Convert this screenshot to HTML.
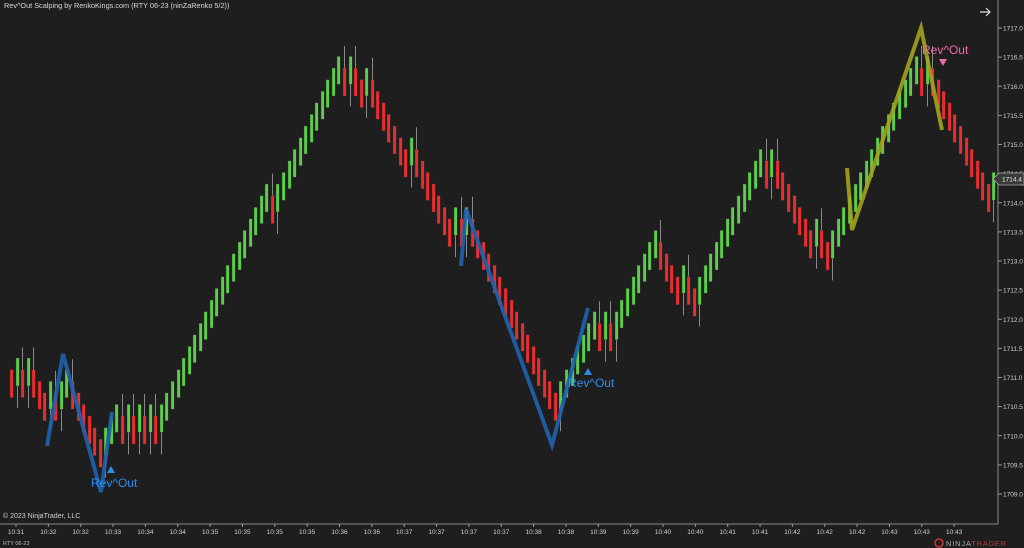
<!DOCTYPE html>
<html><head><meta charset="utf-8"><style>
html,body{margin:0;padding:0;background:#1e1e1e;width:1024px;height:548px;overflow:hidden;font-family:"Liberation Sans",sans-serif}
svg{position:absolute;left:0;top:0}
</style></head><body>
<svg id="s" width="1024" height="548" xmlns="http://www.w3.org/2000/svg">
<rect width="1024" height="548" fill="#1e1e1e"/>
<g id="c"></g>
<polyline points="47,446 63,354 101,492 112,412" fill="none" stroke="#1f62ad" stroke-width="4" stroke-opacity="0.9"/>
<polyline points="461,266 466,209 552,445 588,308" fill="none" stroke="#1f62ad" stroke-width="4" stroke-opacity="0.9"/>
<polyline points="847,168 852,230 921,28 942,130" fill="none" stroke="#a3a31c" stroke-width="4" stroke-opacity="0.9"/>
<path d="M107,473 L111,466 L115,473 Z" fill="#2a8ef0"/>
<text x="91" y="487" fill="#2a8ef0" font-size="12">Rev^Out</text>
<path d="M584,375 L588,368 L592,375 Z" fill="#2a8ef0"/>
<text x="568" y="387" fill="#2a8ef0" font-size="12">Rev^Out</text>
<text x="922" y="54" fill="#f06aa8" font-size="12">Rev^Out</text>
<path d="M939,59 L947,59 L943,66 Z" fill="#f06aa8"/>
<line x1="998" y1="0" x2="998" y2="524" stroke="#8a8a8a"/>
<line x1="0" y1="524" x2="998" y2="524" stroke="#8a8a8a"/>
<g id="ax" font-size="6.5" fill="#cfcfcf"></g>
<text x="4" y="8" fill="#d8d8d8" font-size="7.3">Rev^Out Scalping by RenkoKings.com (RTY 06-23 (ninZaRenko 5/2))</text>
<text x="3" y="518" fill="#d0d0d0" font-size="7">© 2023 NinjaTrader, LLC</text>
<text x="3" y="545" fill="#bbb" font-size="5.5">RTY 06-23</text>
<path d="M980,12 L990,12 M986,8 L990,12 L986,16" stroke="#ddd" stroke-width="1.2" fill="none"/>
<circle cx="939" cy="543" r="4" fill="none" stroke="#c33" stroke-width="1.5"/>
<text x="946" y="546" fill="#aaa" font-size="7.5" letter-spacing="0.8">NINJA<tspan fill="#c33">TRADER</tspan></text>
</svg>
<script>
var ns="http://www.w3.org/2000/svg";
function el(t,a,p){var e=document.createElementNS(ns,t);for(var k in a)e.setAttribute(k,a[k]);p.appendChild(e);return e;}
var g=document.getElementById('c'),ax=document.getElementById('ax');
var wp=[[10,372],[16,356],[45,422],[63,372],[100,476],[105,450],[112,414],[127,418],[143,426],[153,420],[165,403],[195,335],[340,66],[352,90],[372,95],[440,225],[455,232],[462,224],[546,432],[552,410],[590,330],[612,325],[640,255],[655,248],[670,290],[695,300],[702,285],[760,156],[772,178],[792,205],[822,262],[846,205],[852,200],[916,50],[925,85],[975,188],[985,205],[992,194]];
function ty(x){for(var i=1;i<wp.length;i++){if(x<=wp[i][0]){var a=wp[i-1],b=wp[i];return a[1]+(b[1]-a[1])*(x-a[0])/(b[0]-a[0]);}}return wp[wp.length-1][1];}
var step=11.6,prev=ty(10),pd=0;
for(var x=10;x<=993;x+=5.55){
 var t=ty(x),c,d;
 if(Math.abs(t-prev)<step*0.4){d=pd==0?1:-pd;}else d=t<prev?-1:1;
 c=prev+d*step;
 var col=d<0?"#5ccf4a":"#ef2b2b";
 var xx=Math.round(x);
 if(d!=pd&&pd!=0){var wl=d<0?c+14:c-14,w2=d<0?c+14+22:c-14-22;el('line',{x1:xx+1.5,y1:wl,x2:xx+1.5,y2:w2,stroke:"#8a8a8a","stroke-width":1},g);}
 el('rect',{x:xx,y:c-14,width:3.2,height:28,fill:col,stroke:"#333","stroke-width":0.4},g);
 prev=c;pd=d;
}
for(var i=0;i<=16;i++){var y=28+i*29.125;el('line',{x1:998,y1:y,x2:1002,y2:y,stroke:"#999"},ax);var t=el('text',{x:1003,y:y+2.5},ax);t.textContent=(1717-i*0.5).toFixed(1);}
var L=["10:31","10:32","10:32","10:33","10:34","10:34","10:35","10:35","10:35","10:35","10:36","10:36","10:37","10:37","10:37","10:37","10:38","10:38","10:39","10:39","10:40","10:40","10:41","10:41","10:42","10:42","10:42","10:43","10:43","10:43"];
for(var i=0;i<30;i++){var x=16+i*32.35;el('line',{x1:x,y1:524,x2:x,y2:527,stroke:"#999"},ax);var t=el('text',{x:x,y:534,"text-anchor":"middle"},ax);t.textContent=L[i];}
el('path',{d:"M993,179 L999,173 L1024,173 L1024,185 L999,185 Z",fill:"#3a3a3a",stroke:"#aaa","stroke-width":0.8},ax);
var t=el('text',{x:1002,y:181.5,fill:"#eee"},ax);t.textContent="1714.4";
</script>
</body></html>
